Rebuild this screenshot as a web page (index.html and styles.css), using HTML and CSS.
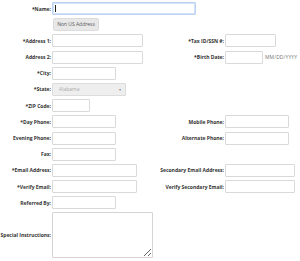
FILE: index.html
```html
<!DOCTYPE html>
<html>
<head>
<meta charset="utf-8">
<link rel="stylesheet" href="styles.css">
</head>
<body>
<form class="form">
  <label class="lbl c1">*Name:</label>
  <span class="focuswrap span3"><input class="inp w144 focus" type="text"></span>

  <span class="c2"><button type="button" class="btn">Non US Address</button></span>

  <label class="lbl c1">*Address 1:</label>
  <input class="inp w91 c2" type="text">
  <label class="lbl c3">*Tax ID/SSN #:</label>
  <input class="inp w51 c4" type="text">

  <label class="lbl c1">Address 2:</label>
  <input class="inp w91 c2" type="text">
  <label class="lbl c3">*Birth Date:</label>
  <span class="c4 dateline"><input class="inp w38" type="text"><span class="hint">MM/DD/YYYY</span></span>

  <label class="lbl c1">*City:</label>
  <input class="inp w64 c2" type="text">

  <label class="lbl c1">*State:</label>
  <span class="select c2"><span>Alabama</span><span class="arrow">&#9662;</span></span>

  <label class="lbl c1">*ZIP Code:</label>
  <input class="inp w38 c2" type="text">

  <label class="lbl c1">*Day Phone:</label>
  <input class="inp w64 c2" type="text">
  <label class="lbl c3">Mobile Phone:</label>
  <input class="inp w64 c4" type="text">

  <label class="lbl c1">Evening Phone:</label>
  <input class="inp w64 c2" type="text">
  <label class="lbl c3">Alternate Phone:</label>
  <input class="inp w64 c4" type="text">

  <label class="lbl c1">Fax:</label>
  <input class="inp w64 c2" type="text">

  <label class="lbl c1">*Email Address:</label>
  <input class="inp w85 c2" type="text">
  <label class="lbl c3">Secondary Email Address:</label>
  <input class="inp w70 c4" type="text">

  <label class="lbl c1">*Verify Email:</label>
  <input class="inp w85 c2" type="text">
  <label class="lbl c3">Verify Secondary Email:</label>
  <input class="inp w70 c4" type="text">

  <label class="lbl c1">Referred By:</label>
  <input class="inp w64 c2" type="text">

  <label class="lbl c1 tall">Special Instructions:</label>
  <textarea class="area span3"></textarea>
</form>
</body>
</html>
```

FILE: styles.css
```css
* { box-sizing: border-box; }
html, body { margin: 0; padding: 0; background: #fff; }
body {
  font-family: "Open Sans", "Liberation Sans", sans-serif;
  font-size: 5px;
  color: #333;
}
.form {
  display: grid;
  grid-template-columns: 51px 98px 73px 1fr;
  column-gap: 1px;
  grid-auto-rows: 13px;
  row-gap: 3.2px;
  padding-top: 2px;
}
.c1 { grid-column: 1; }
.c2 { grid-column: 2; }
.c3 { grid-column: 3; }
.c4 { grid-column: 4; }
.span3 { grid-column: 2 / span 3; }
.lbl {
  font-weight: bold;
  text-align: right;
  align-self: center;
  white-space: nowrap;
  line-height: 6px;
  color: #333;
}
.c1.lbl { grid-column: 1; }
.inp {
  height: 13px;
  border: 1px solid #d9d9d9;
  border-radius: 1px;
  background: #fff;
  padding: 0;
  margin: 0;
  font: inherit;
}
.w144 { width: 144px; }
.w91 { width: 91px; }
.w85 { width: 85px; }
.w70 { width: 70px; }
.w64 { width: 64px; }
.w51 { width: 51px; }
.w38 { width: 38px; }
.focuswrap { position: relative; height: 13px; }
.focus {
  border: 1px solid #bcd2f3;
  box-shadow: inset 0 0 0 1px #d4e2f8;
  outline: none;
}
.focuswrap::after {
  content: "";
  position: absolute;
  left: 3px;
  top: 3px;
  width: 1px;
  height: 7px;
  background: #222;
}
.btn {
  margin: 0 0 0 1px;
  height: 13px;
  width: 46px;
  padding: 0;
  border: 1px solid #dcdcdc;
  border-radius: 2px;
  background: #e8e8e8;
  color: #555;
  font-family: inherit;
  font-size: 5px;
  line-height: 11px;
}
.dateline { display: flex; align-items: center; gap: 2px; }
.hint { color: #777; font-size: 5px; letter-spacing: 0.1px; }
.select {
  width: 74px;
  height: 13px;
  border: 1px solid #dcdcdc;
  border-radius: 1px;
  background: #eeeeee;
  color: #aaa;
  display: flex;
  align-items: center;
  justify-content: space-between;
  padding: 0 4px 0 6px;
}
.arrow { font-size: 4px; color: #888; }
.tall { grid-row: span 3; }
.area {
  grid-row: span 3;
  width: 101px;
  height: 46px;
  margin: 0;
  border: 1px solid #d4d4d4;
  border-radius: 1px;
  padding: 0;
  resize: both;
  background: #fff;
}
```
